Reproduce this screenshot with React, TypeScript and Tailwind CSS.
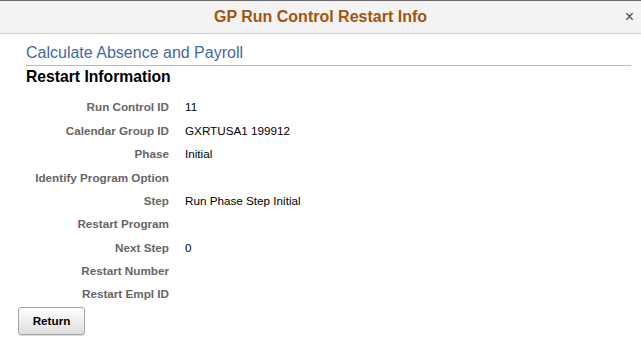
const rows: [string, string][] = [
  ["Run Control ID", "11"],
  ["Calendar Group ID", "GXRTUSA1 199912"],
  ["Phase", "Initial"],
  ["Identify Program Option", ""],
  ["Step", "Run Phase Step Initial"],
  ["Restart Program", ""],
  ["Next Step", "0"],
  ["Restart Number", ""],
  ["Restart Empl ID", ""],
];

export default function App() {
  return (
    <div className="w-[641px] h-[343px] bg-white overflow-hidden font-['Liberation_Sans',Arial,sans-serif]">
      {/* modal header */}
      <div className="relative h-[34px] border-t border-[#6b6b6b] border-b border-b-[#cccccc] bg-[#f3f3f3] flex items-center justify-center">
        <span className="text-[16px] font-bold text-[#a4530b] leading-none">
          GP Run Control Restart Info
        </span>
        <span className="absolute right-[7px] top-[8px] text-[16px] leading-none text-[#4a4a4a]">
          ×
        </span>
      </div>

      <div className="pl-[26px] pr-[10px]">
        <div className="pt-[9px] pb-[3px] border-b border-[#bbbbbb] text-[16px] leading-[19px] text-[#44689e]">
          Calculate Absence and Payroll
        </div>
        <div className="pt-[1px] text-[15.7px] leading-[19px] font-bold text-black">
          Restart Information
        </div>
      </div>

      <div className="mt-[9.5px]">
        {rows.map(([label, value]) => (
          <div key={label} className="flex h-[23.375px] items-center text-[11.7px]">
            <div className="w-[169px] text-right font-bold text-[#666666]">{label}</div>
            <div className="pl-[16px] text-black">{value}</div>
          </div>
        ))}
      </div>

      <div className="pl-[18px] pt-[1px]">
        <button className="w-[67px] h-[28px] rounded-[3px] border border-[#a7a7a7] bg-gradient-to-b from-white to-[#dedede] shadow-[0_1px_1px_rgba(0,0,0,0.15)] text-[11.7px] font-bold text-black">
          Return
        </button>
      </div>
    </div>
  );
}
